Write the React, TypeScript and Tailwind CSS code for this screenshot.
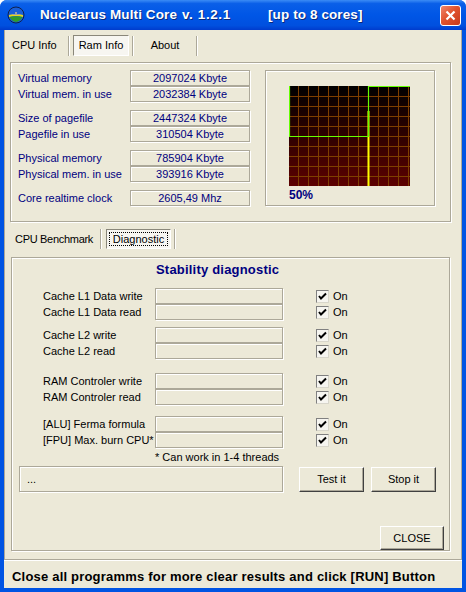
import React from 'react';

const sans = "font-['Liberation_Sans',Arial,sans-serif]";

const Etch = 'border border-[#aca899] shadow-[inset_1px_1px_0_#fff,1px_1px_0_#fff]';

const Sep = () => <div className="w-[2px] h-[20px] border-l border-[#aca899] border-r border-r-white" />;

const ValBox = ({ children }: { children?: React.ReactNode }) => (
  <div className={`h-4 w-[120px] ${Etch} flex items-center justify-center text-[#000080] text-[11px] leading-none`}>
    {children}
  </div>
);

const MemRow = ({ label, value }: { label: string; value: string }) => (
  <div className="flex items-center h-4">
    <div className="w-[112px] text-[#000080] text-[11px] leading-none">{label}</div>
    <ValBox>{value}</ValBox>
  </div>
);

const CheckBox = () => (
  <div className="w-[13px] h-[13px] bg-[#f6f5f0] border border-t-[#808080] border-l-[#808080] border-b-[#d8d6cb] border-r-[#d8d6cb] flex items-center justify-center">
    <svg width="9" height="9" viewBox="0 0 9 9">
      <path d="M1 4 L3 6.5 L8 1.5" stroke="#000" strokeWidth="2" fill="none" />
    </svg>
  </div>
);

const DiagRow = ({ label }: { label: string }) => (
  <div className="flex items-center h-4">
    <div className="w-[112px] text-[11px] leading-none text-black">{label}</div>
    <div className={`w-[128px] h-4 ${Etch}`} />
    <div className="ml-[33px]">
      <CheckBox />
    </div>
    <span className="ml-[4px] text-[11px] leading-none">On</span>
  </div>
);

const Btn = ({ label, className = '' }: { label: string; className?: string }) => (
  <div
    className={`flex items-center justify-center bg-[#ece9d8] border border-t-white border-l-white border-b-[#404040] border-r-[#404040] shadow-[inset_-1px_-1px_0_#aca899] text-[11px] text-black ${className}`}
  >
    {label}
  </div>
);

const Graph = () => {
  const vx = Array.from({ length: 12 }, (_, i) => 9.5 + i * 10);
  const hy = Array.from({ length: 9 }, (_, i) => 10.5 + i * 10);
  return (
    <svg width="121" height="100" viewBox="0 0 121 100">
      <defs>
        <linearGradient id="g" x1="0" y1="0" x2="0" y2="1">
          <stop offset="0" stopColor="#000000" />
          <stop offset="1" stopColor="#5c0000" />
        </linearGradient>
      </defs>
      <rect width="121" height="100" fill="url(#g)" />
      {vx.map((x) => (
        <line key={'v' + x} x1={x} y1="0" x2={x} y2="100" stroke="#7e3f00" strokeWidth="1" />
      ))}
      {hy.map((y) => (
        <line key={'h' + y} x1="0" y1={y} x2="121" y2={y} stroke="#7e3f00" strokeWidth="1" />
      ))}
      <line x1="79.5" y1="25" x2="79.5" y2="100" stroke="#ffff00" strokeWidth="2" />
      <polyline points="0.5,0 0.5,50.5 79.5,50.5 79.5,0.5 121,0.5" stroke="#66ff00" strokeWidth="1.2" fill="none" />
    </svg>
  );
};

const AppIcon = () => (
  <svg width="18" height="18" viewBox="0 0 18 18">
    <circle cx="9" cy="9" r="8" fill="#1a5fd8" stroke="#10204a" strokeWidth="1" />
    <path d="M2 9 Q9 7 16 9 L16 11 Q9 9 2 11 Z" fill="#e8d81a" />
    <path d="M2.5 11 Q9 9.5 15.5 11 Q13 15.5 9 16 Q5 15.5 2.5 11 Z" fill="#2f9a2a" />
    <path d="M5 8 L13 8 L12 9 L6 9 Z M8 6 L10 6 L10 8 L8 8 Z" fill="#9aa0a8" />
  </svg>
);

function App() {
  return (
    <div className={`w-[466px] h-[592px] flex flex-col bg-[#0054e3] rounded-t-[7px] overflow-hidden ${sans}`}>
      {/* title bar */}
      <div className="h-[30px] shrink-0 flex items-center bg-[linear-gradient(to_bottom,#3b8cf5_0%,#0a5fe8_12%,#0056e6_50%,#0050df_85%,#003ccd_100%)]">
        <div className="ml-[7px] w-[18px] h-[18px] shrink-0">
          <AppIcon />
        </div>
        <div className="ml-[15px] flex text-white font-bold text-[13.5px] [text-shadow:1px_1px_0_#0a2a7a] whitespace-nowrap">
          <span className="w-[142px] shrink-0 tracking-[0.1px]">Nuclearus Multi Core</span>
          <span className="w-[86px] shrink-0 tracking-[0.6px]">v. 1.2.1</span>
          <span className="shrink-0 tracking-[0.1px]">[up to 8 cores]</span>
        </div>
        <div className="ml-auto mr-[5px] w-[21px] h-[21px] shrink-0 rounded-[3px] border border-white bg-[linear-gradient(135deg,#f0866c_0%,#e0532e_45%,#c8391a_100%)] flex items-center justify-center">
          <svg width="11" height="11" viewBox="0 0 11 11">
            <path d="M1.5 1.5 L9.5 9.5 M9.5 1.5 L1.5 9.5" stroke="#fff" strokeWidth="2.2" />
          </svg>
        </div>
      </div>

      {/* client */}
      <div className="flex-1 px-[4px] pb-[4px] flex">
        <div className="flex-1 bg-[#ece9d8] flex flex-col">
          {/* main panel */}
          <div className="h-[530px] border-l border-[#aca899] border-r border-b flex flex-col">
            {/* top tabs */}
            <div className="mt-[5px] h-[21px] flex items-center text-[11px] text-black">
              <div className="w-[63px] pl-[7px]">CPU Info</div>
              <Sep />
              <div className="ml-[3px] w-[56px] h-[21px] flex items-center justify-center bg-[#f7f6f1] border border-t-[#8a877a] border-l-[#8a877a] border-b-white border-r-white">
                Ram Info
              </div>
              <div className="ml-[3px]"><Sep /></div>
              <div className="w-[62px] text-center">About</div>
              <Sep />
            </div>

            {/* memory group */}
            <div className={`ml-[5px] mt-[6px] w-[441px] h-[160px] ${Etch} flex pt-[7px] pl-[7px]`}>
              <div className="w-[232px] flex flex-col">
                <MemRow label="Virtual memory" value="2097024 Kbyte" />
                <MemRow label="Virtual mem. in use" value="2032384 Kbyte" />
                <div className="h-2" />
                <MemRow label="Size of pagefile" value="2447324 Kbyte" />
                <MemRow label="Pagefile in use" value="310504 Kbyte" />
                <div className="h-2" />
                <MemRow label="Physical memory" value="785904 Kbyte" />
                <MemRow label="Physical mem. in use" value="393916 Kbyte" />
                <div className="h-2" />
                <MemRow label="Core realtime clock" value="2605,49 Mhz" />
              </div>
              <div className={`ml-[15px] w-[170px] h-[136px] ${Etch} pl-[23px] pt-[15px] flex flex-col`}>
                <Graph />
                <div className="mt-[3px] text-[12px] font-bold text-[#000080] leading-none">50%</div>
              </div>
            </div>

            {/* second tabs */}
            <div className="mt-[7px] h-[20px] flex items-center text-[11px] text-black">
              <div className="w-[95px] pl-[10px] tracking-[-0.3px]">CPU Benchmark</div>
              <Sep />
              <div className="ml-[4px] w-[65px] h-[20px] p-[2px] bg-[#f7f6f1] border border-t-[#8a877a] border-l-[#8a877a] border-b-white border-r-white">
                <div className="w-full h-full border border-dotted border-black flex items-center justify-center">
                  Diagnostic
                </div>
              </div>
              <div className="ml-[3px]"><Sep /></div>
            </div>

            {/* diagnostic group */}
            <div className={`ml-[6px] mt-[8px] w-[439px] h-[294px] ${Etch} flex flex-col`}>
              <div className="mt-[4px] h-[16px] pl-[144px] text-[13px] font-bold text-[#000080] leading-[16px] tracking-[0.2px]">
                Stability diagnostic
              </div>
              <div className="pl-[31px] flex flex-col">
                <div className="mt-[10px]">
                  <DiagRow label="Cache L1 Data write" />
                  <DiagRow label="Cache L1 Data read" />
                </div>
                <div className="mt-[7px]">
                  <DiagRow label="Cache L2 write" />
                  <DiagRow label="Cache L2 read" />
                </div>
                <div className="mt-[14px]">
                  <DiagRow label="RAM Controler write" />
                  <DiagRow label="RAM Controler read" />
                </div>
                <div className="mt-[11px]">
                  <DiagRow label="[ALU] Ferma formula" />
                  <DiagRow label="[FPU] Max. burn CPU*" />
                </div>
              </div>
              <div className="mt-[2px] h-[14px] pl-[143px] text-[11px] leading-[14px] text-black">* Can work in 1-4 threads</div>
              <div className="mt-[2px] pl-[7px] flex items-center">
                <div className={`w-[264px] h-[26px] ${Etch} flex items-center pl-[7px] text-[11px]`}>...</div>
                <Btn label="Test it" className="ml-[16px] w-[65px] h-[25px]" />
                <Btn label="Stop it" className="ml-[7px] w-[65px] h-[25px]" />
              </div>
              <div className="mt-[34px] pl-[368px]">
                <Btn label="CLOSE" className="w-[64px] h-[24px]" />
              </div>
            </div>
          </div>

          {/* status bar */}
          <div className="flex-1 border-t border-white flex items-center pt-[4px] pl-[8px] text-[13px] tracking-[0.2px] font-bold text-black whitespace-nowrap">
            Close all programms for more clear results and click [RUN] Button
          </div>
        </div>
      </div>
    </div>
  );
}

export default App;
